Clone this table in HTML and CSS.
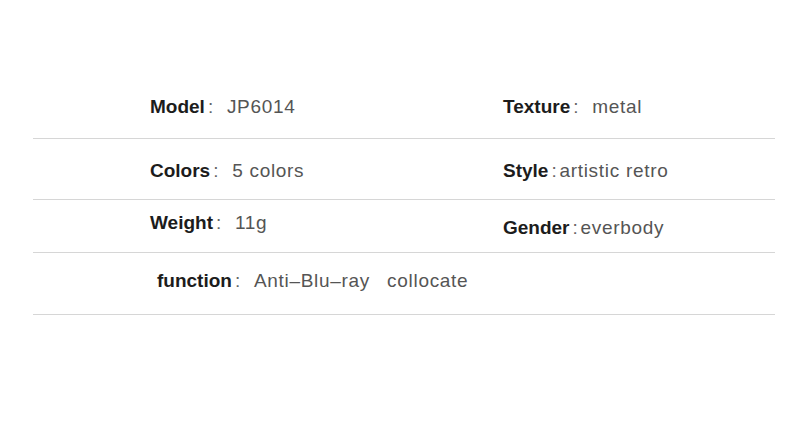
FILE: index.html
```html
<!DOCTYPE html>
<html lang="en">
<head>
    <meta charset="UTF-8">
    <title>Product parameters</title>
    <link rel="stylesheet" href="styles.css">
</head>
<body>
    <div class="specs">
        <div class="row row-1">
            <div class="cell"><span class="label">Model</span><span class="colon">:</span><span class="value">JP6014</span></div>
            <div class="cell"><span class="label">Texture</span><span class="colon">:</span><span class="value">metal</span></div>
        </div>
        <div class="row row-2">
            <div class="cell"><span class="label">Colors</span><span class="colon">:</span><span class="value">5 colors</span></div>
            <div class="cell"><span class="label">Style</span><span class="colon narrow">:</span><span class="value">artistic retro</span></div>
        </div>
        <div class="row row-3">
            <div class="cell"><span class="label">Weight</span><span class="colon">:</span><span class="value">11g</span></div>
            <div class="cell lower"><span class="label">Gender</span><span class="colon narrow">:</span><span class="value">everbody</span></div>
        </div>
        <div class="row row-4">
            <div class="cell indent"><span class="label">function</span><span class="colon">:</span><span class="value">Anti–Blu–ray</span><span class="value extra">collocate</span></div>
        </div>
    </div>
</body>
</html>
```

FILE: styles.css
```css
body {
    margin: 0;
    background-color: #fff;
    font-family: "Liberation Sans", Arial, sans-serif;
    font-size: 19px;
}
.specs {
    width: 742px;
    margin-left: 33px;
    padding-top: 75px;
}
.row {
    display: flex;
    align-items: center;
    box-sizing: border-box;
    border-bottom: 1px solid #d6d6d6;
    padding-left: 117px;
}
.row-1 { height: 64px; }
.row-2 { height: 61px; padding-top: 3px; }
.row-3 { height: 53px; padding-bottom: 6px; }
.row-4 { height: 62px; padding-bottom: 5px; }
.cell {
    flex: 1;
    display: flex;
    align-items: baseline;
    white-space: nowrap;
    line-height: 24px;
}
.cell:first-child {
    flex: 0 0 353px;
}
.cell.lower {
    margin-top: 5px;
    margin-bottom: -5px;
}
.cell.indent {
    padding-left: 7px;
    flex: 1;
}
.label {
    font-weight: bold;
    color: #1c1c1c;
}
.colon {
    color: #666;
    width: 19px;
    padding-left: 3px;
}
.colon.narrow {
    width: 8px;
    padding-left: 3px;
}
.value {
    color: #555;
    letter-spacing: 0.7px;
}
.value.extra {
    margin-left: 17px;
}
```
